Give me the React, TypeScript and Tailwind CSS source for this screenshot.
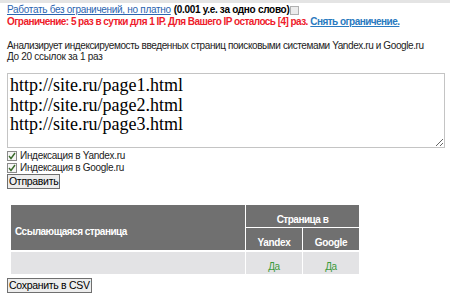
const urls = "http://site.ru/page1.html\nhttp://site.ru/page2.html\nhttp://site.ru/page3.html";

function CheckBox({ checked = false }: { checked?: boolean }) {
  return (
    <span className="inline-flex h-[10px] w-[10px] shrink-0 items-center justify-center border border-[#8a8a8a] bg-[#f6f6f6]">
      {checked && (
        <svg width="8" height="8" viewBox="0 0 8 8">
          <path d="M1 4 L3 6.5 L7 1" fill="none" stroke="#3a6a2a" strokeWidth="1.4" />
        </svg>
      )}
    </span>
  );
}

export default function App() {
  return (
    <div className="min-h-screen bg-white font-['Liberation_Sans',Arial,sans-serif] text-[10px] leading-[12px] tracking-[-0.3px] text-[#222]">
      <div className="h-[3px] bg-[#e4e4e4]" />
      <div className="px-[7px] pt-[1px]">
        <div className="flex items-center whitespace-nowrap">
          <a href="#" className="text-[#2a64b0] underline">Работать без ограничений, но платно</a>
          <span className="ml-[3px] font-bold text-black">(0.001 у.е. за одно слово)</span>
          <span className="ml-[1px] inline-block h-[9px] w-[9px] border border-[#b0b0b0] bg-[#ececec]" />
        </div>
        <div className="whitespace-nowrap">
          <span className="font-bold tracking-[-0.55px] text-[#ee1c2c]">Ограничение: 5 раз в сутки для 1 IP. Для Вашего IP осталось [4] раз.</span>{" "}
          <a href="#" className="font-bold tracking-[-0.55px] text-[#2a7ac0] underline">Снять ограничение.</a>
        </div>

        <div className="mt-[12px] whitespace-nowrap leading-[11px] tracking-[-0.4px]">Анализирует индексируемость введенных страниц поисковыми системами Yandex.ru и Google.ru</div>
        <div className="leading-[11px]">До 20 ссылок за 1 раз</div>

        <textarea
          defaultValue={urls}
          className="mt-[11px] block h-[75px] w-[438px] resize-y border border-[#c4c4c4] px-[2px] py-[2px] font-['Liberation_Serif',serif] text-[18px] leading-[19.5px] tracking-normal text-black outline-none"
        />

        <label className="mt-[2px] flex h-[11px] items-center gap-[3px]">
          <CheckBox checked />
          <span>Индексация в Yandex.ru</span>
        </label>
        <label className="mt-[1px] flex h-[11px] items-center gap-[3px]">
          <CheckBox checked />
          <span>Индексация в Google.ru</span>
        </label>
        <button className="mt-[1px] block h-[15px] border border-[#6f6f6f] bg-[#ededed] px-[1px] text-[10.5px] leading-[13px] text-black">
          Отправить
        </button>

        <table className="ml-[3px] mt-[15px] w-[350px] border-collapse text-[10px] leading-[12px]">
          <thead>
            <tr className="h-[23px]">
              <th rowSpan={2} className="w-[235px] border border-white bg-[#707070] pl-[4px] pt-[10px] text-left align-middle font-bold tracking-[-0.5px] text-white">
                Ссылающаяся страница
              </th>
              <th colSpan={2} className="border border-white bg-[#707070] pb-[1px] text-center align-bottom font-bold tracking-[-0.5px] text-white">
                Страница в
              </th>
            </tr>
            <tr className="h-[23px]">
              <th className="w-[57px] border border-white bg-[#707070] pb-[1px] text-center align-bottom font-bold text-white">Yandex</th>
              <th className="border border-white bg-[#707070] pb-[1px] text-center align-bottom font-bold text-white">Google</th>
            </tr>
          </thead>
          <tbody>
            <tr className="h-[24px]">
              <td className="border border-t-2 border-white bg-[#e3e3e5]" />
              <td className="border border-t-2 border-white bg-[#e3e3e5] pb-[1px] text-center align-bottom text-[#3c9a3c]">Да</td>
              <td className="border border-t-2 border-white bg-[#e3e3e5] pb-[1px] text-center align-bottom text-[#3c9a3c]">Да</td>
            </tr>
          </tbody>
        </table>

        <button className="mt-[3px] block h-[15px] border border-[#6f6f6f] bg-[#ededed] px-[1px] text-[10.5px] leading-[13px] text-black">
          Сохранить в CSV
        </button>
      </div>
    </div>
  );
}
